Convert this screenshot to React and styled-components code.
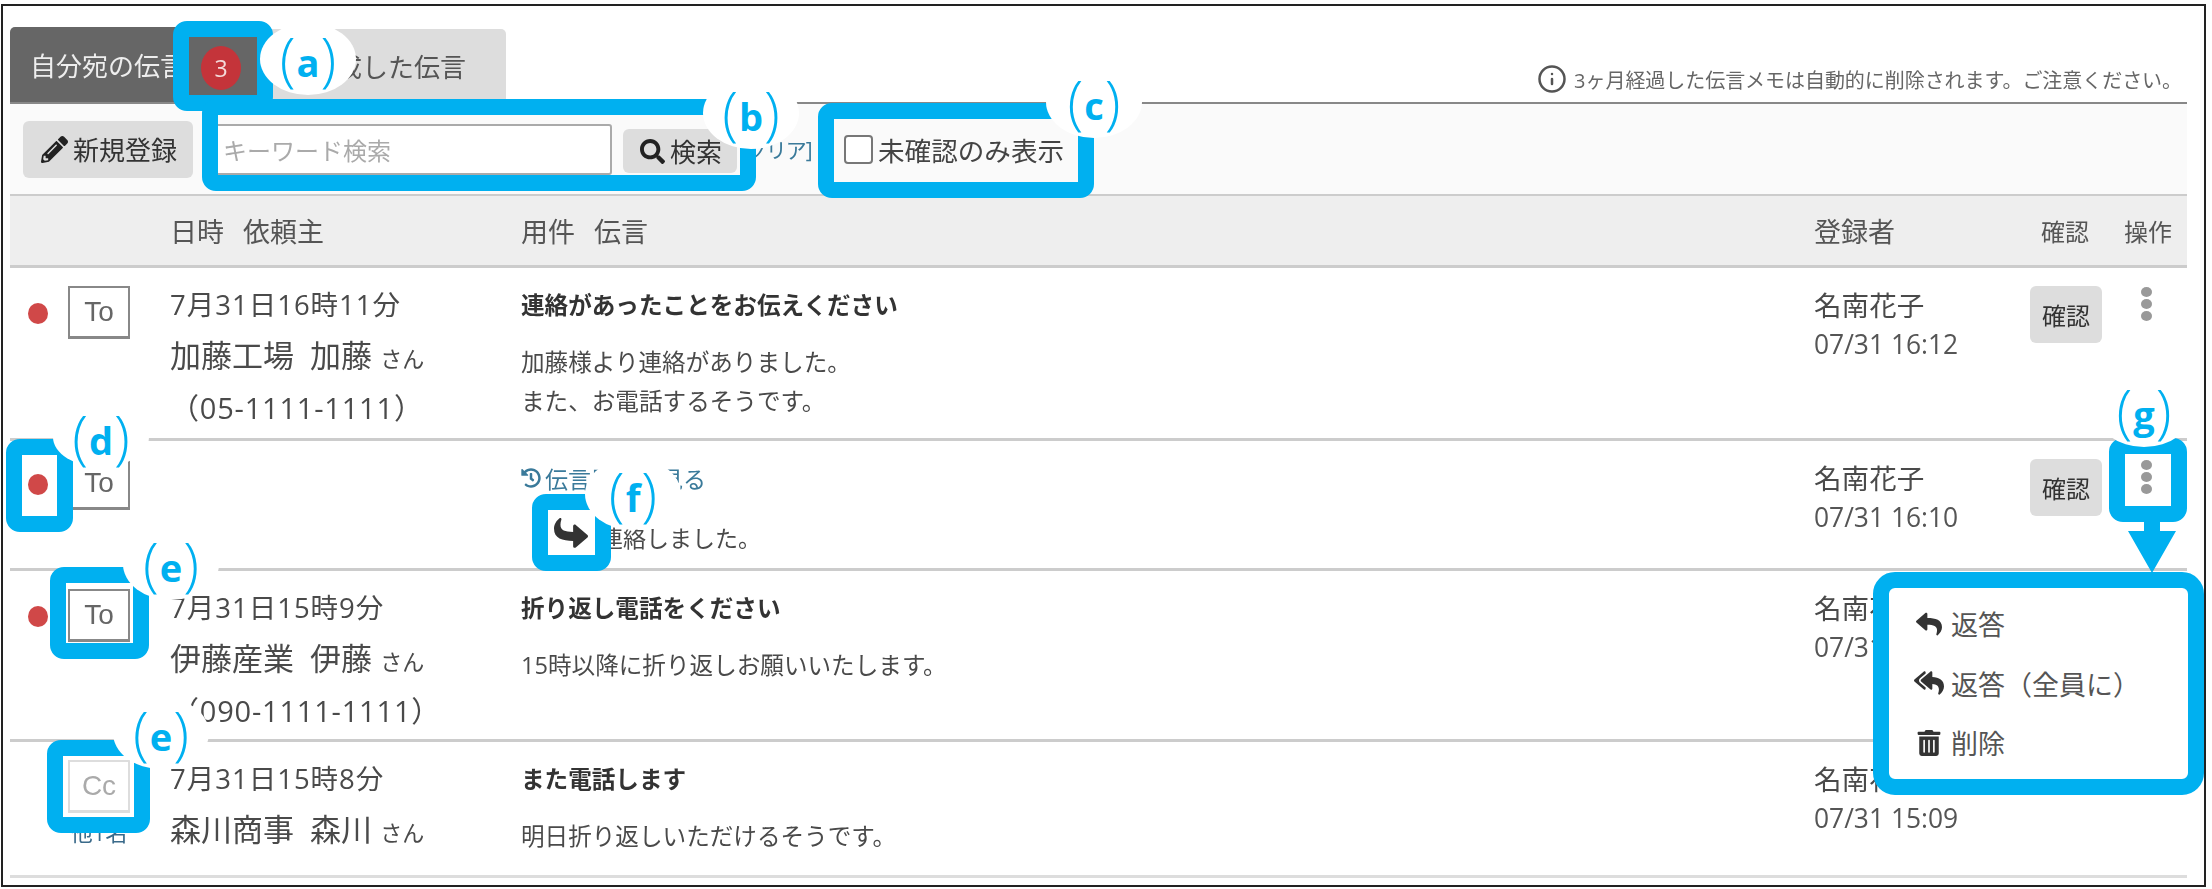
import React from "react";
import styled, { createGlobalStyle } from "styled-components";
import { FaPencilAlt, FaSearch, FaReply, FaReplyAll, FaTrashAlt, FaHistory } from "react-icons/fa";
import { Info } from "lucide-react";

const Global = createGlobalStyle`
  html, body { margin: 0; padding: 0; background: #fff; }
  body { font-family: "Open Sans", "Noto Sans CJK JP", sans-serif; color: #4a4a4a; }
`;

const Page = styled.div`
  position: relative;
  width: 2212px;
  height: 889px;
  overflow: hidden;
  padding: 4px 6px 2px 1px;
  box-sizing: border-box;
`;

const Frame = styled.div`
  height: 100%;
  box-sizing: border-box;
  border: 2px solid #222;
  padding: 21px 17px 0 7px;
  display: flex;
  flex-direction: column;
  background: #fff;
`;

const Content = styled.div`
  filter: blur(0.45px);
`;

const TabBar = styled.div`
  display: flex;
  align-items: flex-end;
  height: 75px;
  border-bottom: 2px solid #888;
  box-sizing: content-box;
`;

const ActiveTab = styled.div`
  width: 248px;
  height: 75px;
  box-sizing: border-box;
  background: #666;
  color: #eee;
  font-size: 26px;
  padding-left: 20px;
  display: flex;
  align-items: center;
  gap: 15px;
  border-radius: 5px 5px 0 0;
`;

const Badge = styled.span`
  width: 40px;
  height: 44px;
  border-radius: 50%;
  background: #c4343a;
  color: #f4dada;
  font-size: 23px;
  display: flex;
  align-items: center;
  justify-content: center;
  margin-top: 7px;
`;

const Tab = styled.div`
  width: 248px;
  height: 73px;
  box-sizing: border-box;
  background: #ddd;
  color: #555;
  font-size: 26px;
  padding-left: 52px;
  display: flex;
  align-items: center;
  border-radius: 0 5px 0 0;
`;

const Notice = styled.div`
  margin-left: auto;
  margin-right: 5px;
  height: 75px;
  display: flex;
  align-items: center;
  gap: 7px;
  padding-top: 29px;
  box-sizing: border-box;
  font-size: 20px;
  letter-spacing: -0.05px;
  color: #666;
  svg { flex: none; }
`;

const Toolbar = styled.div`
  height: 90px;
  background: #fafafa;
  display: flex;
  align-items: center;
  padding-left: 13px;
`;

const ToolButton = styled.div`
  width: 170px;
  height: 57px;
  box-sizing: border-box;
  background: #ddd;
  border-radius: 6px;
  padding-left: 2px;
  display: flex;
  align-items: center;
  justify-content: center;
  gap: 5px;
  font-size: 26px;
  color: #333;
`;

const SearchInput = styled.div`
  width: 399px;
  height: 51px;
  margin-left: 20px;
  box-sizing: border-box;
  background: #fff;
  border: 2px solid #aaa;
  border-radius: 3px;
  padding-left: 8px;
  display: flex;
  align-items: center;
  font-size: 24px;
  color: #aaa;
`;

const SearchButton = styled(ToolButton)`
  width: 114px;
  height: 44px;
  margin-left: 11px;
  margin-top: 4px;
`;

const ClearLink = styled.span`
  margin-left: 3px;
  width: 73px;
  font-size: 21px;
  letter-spacing: -1px;
  color: #3a7a9a;
  white-space: nowrap;
`;

const CheckLabel = styled.label`
  margin-left: 31px;
  display: flex;
  align-items: center;
  gap: 5px;
  font-size: 26.6px;
  color: #444;
`;

const CheckBox = styled.span`
  width: 25px;
  height: 25px;
  border: 2px solid #777;
  border-radius: 4px;
  background: #fff;
`;

const columns = "160px 1644px 216px 83px 1fr";

const HeaderRow = styled.div`
  display: grid;
  grid-template-columns: ${columns};
  height: 74px;
  box-sizing: border-box;
  align-items: center;
  background: #eee;
  border-top: 2px solid #ccc;
  border-bottom: 3px solid #ccc;
  color: #555;
`;

const HeadCell = styled.div`
  padding-left: ${(p) => p.$pad || 0}px;
  font-size: ${(p) => p.$size || 27}px;
  white-space: pre;
`;

const HeadSplit = styled.div`
  display: grid;
  grid-template-columns: 351px 1fr;
`;

const HeadPair = styled.div`
  display: flex;
  gap: 19px;
  white-space: nowrap;
  font-size: 27px;
`;

const Row = styled.div`
  display: grid;
  grid-template-columns: ${columns};
  height: ${(p) => p.$h}px;
  box-sizing: border-box;
  border-bottom: 3px solid ${(p) => p.$line || "#ccc"};
  align-items: start;
`;

const MarkCell = styled.div`
  display: flex;
  align-items: flex-start;
  gap: 20px;
  padding: ${(p) => p.$top || 18}px 0 0 18px;
`;

const Dot = styled.span`
  width: 20px;
  height: 21px;
  flex: none;
  border-radius: 50%;
  margin-top: 17px;
  background: ${(p) => (p.$on ? "#d04848" : "transparent")};
`;

const MarkStack = styled.div`
  display: flex;
  flex-direction: column;
  align-items: center;
`;

const ToBox = styled.div`
  width: 62px;
  height: 53px;
  box-sizing: border-box;
  border: 2px solid ${(p) => (p.$cc ? "#ddd" : "#888")};
  border-bottom-width: 3px;
  display: flex;
  align-items: center;
  justify-content: center;
  font-family: "Liberation Sans", sans-serif;
  font-size: 28px;
  color: ${(p) => (p.$cc ? "#aaa" : "#666")};
  background: #fff;
`;

const Others = styled.span`
  margin-top: 2px;
  font-size: 22px;
  color: #3a6a8a;
`;

const BodyCell = styled.div`
  display: grid;
  grid-template-columns: 351px 1fr;
  padding-top: 12px;
`;

const InfoCol = styled.div`
  line-height: 50px;
  color: #4a4a4a;
`;

const DateLine = styled.div`
  font-size: 27.5px;
  letter-spacing: 1px;
`;

const Name = styled.div`
  white-space: pre;
  font-size: 31px;
`;

const San = styled.span`
  font-size: 22px;
`;

const Phone = styled.div`
  font-size: 29px;
  letter-spacing: 0.8px;
`;

const MsgCol = styled.div``;

const Title = styled.div`
  font-size: 23.6px;
  font-weight: 700;
  line-height: 50px;
  color: #333;
`;

const Text = styled.div`
  font-size: 23.6px;
  line-height: 39px;
  margin-top: 13px;
  color: #4a4a4a;
`;

const ThreadLink = styled.div`
  display: flex;
  align-items: center;
  gap: 4px;
  height: 50px;
  font-size: 23px;
  color: #3a7a9a;
`;

const ThreadText = styled.div`
  font-size: 23px;
  line-height: 39px;
  margin-top: 16px;
  padding-left: 79px;
  color: #4a4a4a;
`;

const Registrar = styled.div`
  padding-top: 17px;
`;

const RegName = styled.div`
  font-size: 27.6px;
  line-height: 40px;
  color: #4a4a4a;
`;

const RegDate = styled.div`
  font-size: 26.4px;
  line-height: 38px;
  color: #555;
`;

const ConfirmCell = styled.div`
  padding-top: 18px;
`;

const ConfirmButton = styled.div`
  width: 72px;
  height: 57px;
  background: #ddd;
  border-radius: 6px;
  display: flex;
  align-items: center;
  justify-content: center;
  font-size: 24px;
  color: #333;
`;

const DotsCell = styled.div`
  padding: 19px 0 0 28px;
`;

const Kebab = styled.div`
  display: flex;
  flex-direction: column;
  gap: 2px;
  width: 11px;
`;

const KebabDot = styled.span`
  width: 11px;
  height: 10px;
  border-radius: 50%;
  background: #999;
`;

const Callout = styled.div`
  position: absolute;
  left: ${(p) => p.$x}px;
  top: ${(p) => p.$y}px;
  width: ${(p) => p.$w}px;
  height: ${(p) => p.$h}px;
  box-sizing: border-box;
  border: 16px solid #00b0f0;
  border-radius: 14px;
`;

const LabelBubble = styled.div`
  position: absolute;
  left: ${(p) => p.$x - 48}px;
  top: ${(p) => p.$y - (p.$h || 72) / 2}px;
  width: 96px;
  height: ${(p) => p.$h || 72}px;
  box-sizing: border-box;
  padding-top: 6px;
  border-radius: 50%;
  background: #fff;
  display: flex;
  align-items: center;
  justify-content: center;
  gap: 1px;
  color: #00b0f0;
  font-size: 38px;
  font-weight: 700;
  line-height: 1;
`;

const Paren = styled.span`
  font-weight: 300;
  font-size: 58px;
  margin-top: -8px;
`;

const MenuCard = styled.div`
  position: absolute;
  left: 1873px;
  top: 572px;
  width: 331px;
  height: 223px;
  box-sizing: border-box;
  border: 16px solid #00b0f0;
  border-radius: 22px;
  background: #fff;
  display: flex;
  flex-direction: column;
  padding: 6px 0 0 24px;
`;

const MenuItem = styled.div`
  display: flex;
  align-items: center;
  height: 59.5px;
  gap: 6px;
  font-size: 27px;
  color: #555;
  white-space: nowrap;
`;

const MenuIcon = styled.span`
  width: 32px;
  display: flex;
  justify-content: center;
  color: #333;
  font-size: ${(p) => p.$size || 26}px;
`;

const ArrowSvg = styled.svg`
  position: absolute;
  left: 2128px;
  top: 520px;
`;

const ForwardCover = styled.div`
  position: absolute;
  left: 547px;
  top: 510px;
  width: 48px;
  height: 45px;
  background: #fff;
  display: flex;
  align-items: center;
  justify-content: center;
  color: #333;
  font-size: 34px;
`;

const Flip = styled.span`
  display: flex;
  transform: rotate(180deg);
`;

const Actions = ({ noConfirm }) => (
  <>
    {noConfirm ? (
      <div />
    ) : (
      <ConfirmCell>
        <ConfirmButton>確認</ConfirmButton>
      </ConfirmCell>
    )}
    <DotsCell>
      <Kebab>
        <KebabDot />
        <KebabDot />
        <KebabDot />
      </Kebab>
    </DotsCell>
  </>
);

const Msg = ({ mark, cc, on, others, date, company, person, phone, title, lines, h, line, regDate, noConfirm }) => (
  <Row $h={h} $line={line}>
    <MarkCell>
      <Dot $on={on} />
      <MarkStack>
        <ToBox $cc={cc}>{mark}</ToBox>
        {others && <Others>他1名</Others>}
      </MarkStack>
    </MarkCell>
    <BodyCell>
      <InfoCol>
        <DateLine>{date}</DateLine>
        <Name>
          {company}
          {"  "}
          {person} <San>さん</San>
        </Name>
        {phone && <Phone>{phone}</Phone>}
      </InfoCol>
      <MsgCol>
        <Title>{title}</Title>
        <Text>
          {lines.map((l) => (
            <div key={l}>{l}</div>
          ))}
        </Text>
      </MsgCol>
    </BodyCell>
    <Registrar>
      <RegName>名南花子</RegName>
      <RegDate>{regDate}</RegDate>
    </Registrar>
    <Actions noConfirm={noConfirm} />
  </Row>
);

const boxes = [
  { x: 173, y: 21, w: 100, h: 90 },
  { x: 202, y: 99, w: 554, h: 92 },
  { x: 818, y: 103, w: 276, h: 95 },
  { x: 6, y: 439, w: 67, h: 93 },
  { x: 50, y: 567, w: 99, h: 92 },
  { x: 47, y: 740, w: 103, h: 93 },
  { x: 532, y: 494, w: 79, h: 77 },
  { x: 2109, y: 438, w: 78, h: 84 },
];

const labels = [
  { t: "a", x: 308, y: 59 },
  { t: "b", x: 751, y: 113 },
  { t: "c", x: 1094, y: 102 },
  { t: "d", x: 101, y: 437, h: 60 },
  { t: "e", x: 171, y: 564 },
  { t: "e", x: 161, y: 733 },
  { t: "f", x: 633, y: 494 },
  { t: "g", x: 2144, y: 411 },
];

export default function App() {
  return (
    <Page>
      <Global />
      <Frame>
        <Content>
          <TabBar>
            <ActiveTab>
              自分宛の伝言
              <Badge>3</Badge>
            </ActiveTab>
            <Tab>作成した伝言</Tab>
            <Notice>
              <Info size={30} strokeWidth={2} color="#555" />
              3ヶ月経過した伝言メモは自動的に削除されます。ご注意ください。
            </Notice>
          </TabBar>
          <Toolbar>
            <ToolButton>
              <FaPencilAlt size={27} color="#222" />
              新規登録
            </ToolButton>
            <SearchInput>キーワード検索</SearchInput>
            <SearchButton>
              <FaSearch size={25} color="#222" />
              検索
            </SearchButton>
            <ClearLink>[クリア]</ClearLink>
            <CheckLabel>
              <CheckBox />
              未確認のみ表示
            </CheckLabel>
          </Toolbar>
          <HeaderRow>
            <div />
            <HeadSplit>
              <HeadPair>
                <span>日時</span>
                <span>依頼主</span>
              </HeadPair>
              <HeadPair>
                <span>用件</span>
                <span>伝言</span>
              </HeadPair>
            </HeadSplit>
            <HeadCell>登録者</HeadCell>
            <HeadCell $size={24} $pad={11}>確認</HeadCell>
            <HeadCell $size={24} $pad={11}>操作</HeadCell>
          </HeaderRow>
          <Msg
            mark="To"
            on
            date="7月31日16時11分"
            company="加藤工場"
            person="加藤"
            phone="（05-1111-1111）"
            title="連絡があったことをお伝えください"
            lines={["加藤様より連絡がありました。", "また、お電話するそうです。"]}
            h={173}
            regDate="07/31 16:12"
          />
          <Row $h={130}>
            <MarkCell $top={16}>
              <Dot $on />
              <ToBox>To</ToBox>
            </MarkCell>
            <BodyCell>
              <div />
              <MsgCol>
                <ThreadLink>
                  <FaHistory size={20} />
                  伝言履歴を見る
                </ThreadLink>
                <ThreadText>連絡しました。</ThreadText>
              </MsgCol>
            </BodyCell>
            <Registrar>
              <RegName>名南花子</RegName>
              <RegDate>07/31 16:10</RegDate>
            </Registrar>
            <Actions />
          </Row>
          <Msg
            mark="To"
            on
            date="7月31日15時9分"
            company="伊藤産業"
            person="伊藤"
            phone="（090-1111-1111）"
            title="折り返し電話をください"
            lines={["15時以降に折り返しお願いいたします。"]}
            h={171}
            regDate="07/31 15:10"
          />
          <Msg
            mark="Cc"
            cc
            others
            noConfirm
            date="7月31日15時8分"
            company="森川商事"
            person="森川"
            title="また電話します"
            lines={["明日折り返しいただけるそうです。"]}
            h={136}
            line="#ddd"
            regDate="07/31 15:09"
          />
        </Content>
      </Frame>

      <ForwardCover>
        <Flip>
          <FaReply />
        </Flip>
      </ForwardCover>
      {boxes.map((b) => (
        <Callout key={b.x} $x={b.x} $y={b.y} $w={b.w} $h={b.h} />
      ))}
      {labels.map((l) => (
        <LabelBubble key={l.t + l.y} $x={l.x} $y={l.y} $h={l.h}>
          <Paren>(</Paren>
          {l.t}
          <Paren>)</Paren>
        </LabelBubble>
      ))}
      <ArrowSvg width="48" height="54" viewBox="0 0 48 54">
        <path d="M16 0h16v11h16L24 53 0 11h16z" fill="#00b0f0" />
      </ArrowSvg>
      <MenuCard>
        <MenuItem>
          <MenuIcon>
            <FaReply />
          </MenuIcon>
          返答
        </MenuItem>
        <MenuItem>
          <MenuIcon $size={30}>
            <FaReplyAll />
          </MenuIcon>
          返答（全員に）
        </MenuItem>
        <MenuItem>
          <MenuIcon>
            <FaTrashAlt />
          </MenuIcon>
          削除
        </MenuItem>
      </MenuCard>
    </Page>
  );
}
